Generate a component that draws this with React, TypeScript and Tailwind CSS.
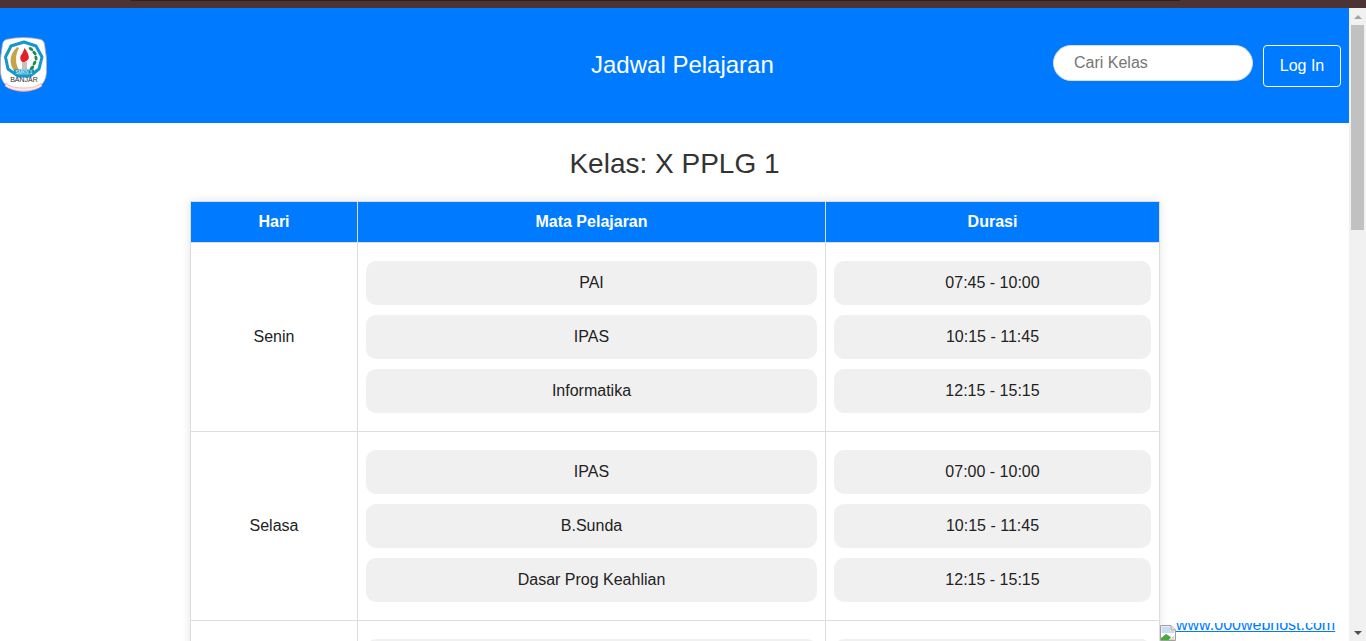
const rows = [
  {
    day: 'Senin',
    items: [
      ['PAI', '07:45 - 10:00'],
      ['IPAS', '10:15 - 11:45'],
      ['Informatika', '12:15 - 15:15'],
    ],
  },
  {
    day: 'Selasa',
    items: [
      ['IPAS', '07:00 - 10:00'],
      ['B.Sunda', '10:15 - 11:45'],
      ['Dasar Prog Keahlian', '12:15 - 15:15'],
    ],
  },
  {
    day: '',
    items: [
      ['', ''],
      ['', ''],
      ['', ''],
    ],
  },
];

function Logo() {
  return (
    <svg width="47" height="56" viewBox="0 0 47 56" className="block shrink-0">
      <path
        d="M6 2.5 Q23.5 -1.5 41 2.5 Q44 3.5 44.5 7 Q47.5 22 46.5 36 Q45.5 47 37 51 Q23.5 58 10 51 Q1.5 47 0.5 36 Q-0.5 22 2.5 7 Q3 3.5 6 2.5 Z"
        fill="#ffffff"
        stroke="#a9a9a9"
        strokeWidth="0.8"
      />
      <path
        d="M24 5 L36 9 L42 20 L39 32 L30 39 L18 39 L8 32 L5.5 20 L11 9 Z"
        fill="#ffffff"
        stroke="#1497c9"
        strokeWidth="3"
        strokeLinejoin="round"
      />
      <path d="M17 10 Q6 21 14 34 Q18 37 21 36 Q12 24 19 11 Z" fill="#c7a44a" />
      <path d="M24.5 11 Q30 18 28.5 22 Q26 26 22.5 25 Q19.5 23 20.5 19 Q23 16 24.5 11 Z" fill="#e3202a" />
      <rect x="22" y="25" width="5" height="7" fill="#c9c0b8" />
      <g fill="#1f8a4c">
        <ellipse cx="31" cy="12" rx="2.6" ry="1.5" transform="rotate(35 31 12)" />
        <ellipse cx="34.5" cy="16" rx="2.6" ry="1.5" transform="rotate(50 34.5 16)" />
        <ellipse cx="36" cy="21" rx="2.6" ry="1.5" transform="rotate(80 36 21)" />
        <ellipse cx="34.5" cy="26" rx="2.6" ry="1.5" transform="rotate(-60 34.5 26)" />
        <ellipse cx="32" cy="31" rx="2.8" ry="1.6" transform="rotate(-45 32 31)" />
      </g>
      <rect x="14" y="32.5" width="20" height="5" fill="#1497c9" />
      <text x="24" y="36.8" textAnchor="middle" fontSize="4.5" fill="#ffffff" className="font-['Liberation_Sans',sans-serif]">
        SMKN 1
      </text>
      <text x="24" y="44.8" textAnchor="middle" fontSize="7" fill="#2f2f2f" className="font-['Liberation_Sans',sans-serif]">
        BANJAR
      </text>
      <path d="M6 46 Q10 51 23.5 51 Q37 51 41 46 L42 49 Q36 54 23.5 54 Q11 54 5 49 Z" fill="#fde6e6" stroke="#e88" strokeWidth="0.5" />
    </svg>
  );
}

function BrokenImage() {
  return (
    <svg width="16" height="16" viewBox="0 0 16 16" className="block shrink-0">
      <path d="M0.5 0.5 H11 L15.5 5 V15.5 H0.5 Z" fill="#ffffff" stroke="#a0a0a0" />
      <path d="M11 0.5 V5 H15.5" fill="#e4e4e4" stroke="#a0a0a0" />
      <path d="M1.5 1.5 H10 V6 H14.5 V8 H1.5 Z" fill="#c9dbf5" />
      <path d="M1 15 V13 L6 9 L11 12 L9 15 Z" fill="#4fa83d" />
      <path d="M9 15 L14.5 10 V15 Z" fill="#d8d8d8" />
    </svg>
  );
}

export default function App() {
  return (
    <div className="h-[641px] w-[1366px] overflow-hidden relative bg-white font-['Liberation_Sans',Arial,sans-serif] text-[#333333]">
      <div className="h-2 bg-[#4c3334]">
        <div className="ml-[130px] w-[1050px] h-px bg-[#33211f]"></div>
      </div>

      <div className="flex h-[633px]">
        <div className="w-[1349px] shrink-0">
          {/* Header */}
          <header className="h-[115px] bg-[#007bff] flex">
            <div className="mt-[29px]">
              <Logo />
            </div>
            <h1 className="ml-[544px] mt-[43px] text-2xl leading-7 font-normal text-white whitespace-nowrap">
              Jadwal Pelajaran
            </h1>
            <div className="ml-auto mr-2 mt-[37px] flex items-start gap-2.5">
              <input
                placeholder="Cari Kelas"
                className="w-[200px] h-9 rounded-[18px] bg-white border border-[#dddddd] pl-5 text-base outline-none placeholder:text-[#757575]"
              />
              <button className="w-[78px] h-[42px] rounded border border-white text-base text-white">Log In</button>
            </div>
          </header>

          <h2 className="mt-[25px] h-[32px] text-center text-[28px] leading-8 font-normal">Kelas: X PPLG 1</h2>

          {/* Jadwal */}
          <table className="mt-[21px] ml-[190px] w-[969px] table-fixed border-collapse shadow-[0_0_10px_rgba(0,0,0,0.1)] text-base text-[#222222]">
            <colgroup>
              <col className="w-[167px]" />
              <col className="w-[468px]" />
              <col className="w-[334px]" />
            </colgroup>
            <thead>
              <tr className="h-[41px] bg-[#007bff] text-white">
                <th className="border border-[#dddddd] font-bold">Hari</th>
                <th className="border border-[#dddddd] font-bold">Mata Pelajaran</th>
                <th className="border border-[#dddddd] font-bold">Durasi</th>
              </tr>
            </thead>
            <tbody>
              {rows.map((row, i) => (
                <tr key={i}>
                  <td className="border border-[#dddddd] text-center">{row.day}</td>
                  <td className="border border-[#dddddd] px-2 py-[18px]">
                    <div className="flex flex-col gap-2.5">
                      {row.items.map((item, j) => (
                        <div key={j} className="h-11 rounded-[10px] bg-[#f0f0f0] flex items-center justify-center">
                          {item[0]}
                        </div>
                      ))}
                    </div>
                  </td>
                  <td className="border border-[#dddddd] px-2 py-[18px]">
                    <div className="flex flex-col gap-2.5">
                      {row.items.map((item, j) => (
                        <div key={j} className="h-11 rounded-[10px] bg-[#f0f0f0] flex items-center justify-center">
                          {item[1]}
                        </div>
                      ))}
                    </div>
                  </td>
                </tr>
              ))}
            </tbody>
          </table>
        </div>

        {/* Scrollbar */}
        <div className="w-[17px] bg-[#f1f1f1] flex flex-col items-center">
          <div className="h-[17px] flex items-center justify-center">
            <div className="w-0 h-0 border-x-[4px] border-x-transparent border-b-[4px] border-b-[#a3a3a3]"></div>
          </div>
          <div className="w-[13px] h-[205px] bg-[#c1c1c1]"></div>
          <div className="mt-auto h-[17px] flex items-center justify-center">
            <div className="w-0 h-0 border-x-[4px] border-x-transparent border-t-[4px] border-t-[#505050]"></div>
          </div>
        </div>
      </div>

      {/* Badge hosting */}
      <div className="absolute left-[1160px] top-[623px] h-[18px] w-[190px] overflow-hidden">
        <a href="#" className="absolute left-0 top-[-7px] flex items-end text-base leading-[18px] text-[#007bff] underline whitespace-nowrap">
          <span className="w-4 h-4"></span>www.000webhost.com
        </a>
        <div className="absolute left-0 top-[2px]">
          <BrokenImage />
        </div>
      </div>
    </div>
  );
}
